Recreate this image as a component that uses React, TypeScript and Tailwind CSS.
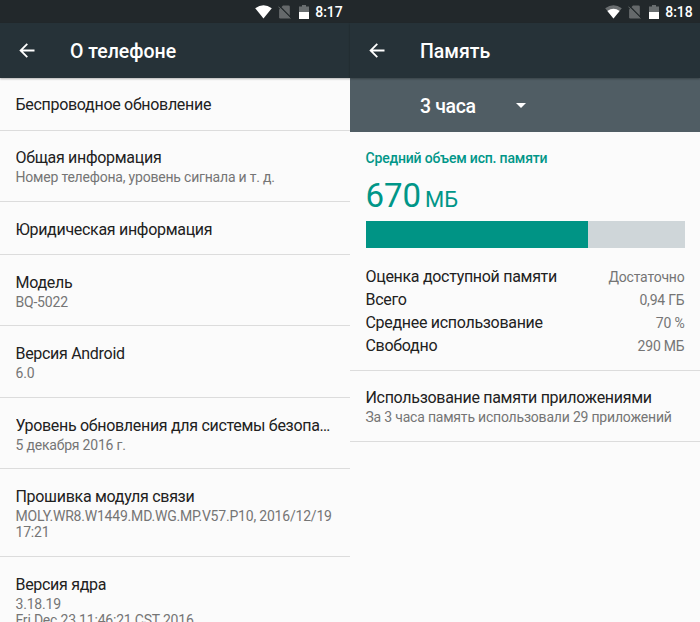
const font = "font-['Roboto','Noto_Sans',sans-serif]";
const primary = "text-[16px] leading-5 tracking-[-0.3px]";
const secondary = "text-[14px] leading-4 tracking-[-0.2px] text-[#757575]";

function StatusBar({ time, weak }: { time: string; weak?: boolean }) {
  return (
    <div className="flex h-[23px] shrink-0 items-center justify-end bg-[#22282b] pt-px pr-[7.5px] text-white">
      <svg className="mr-[6px] h-[14px] w-[17px]" viewBox="0 0 17 14">
        <path d="M0.2 3.2Q8.5 -2.6 16.8 3.2L8.5 13.6Z" fill="#fff" fillOpacity={weak ? 0.33 : 1} />
        {weak && <path d="M2.4 6Q8.5 1.6 14.6 6L8.5 13.6Z" fill="#fff" />}
      </svg>
      <svg className="mr-[8px] h-[14px] w-[13px]" viewBox="0 0 13 14">
        <path d="M5 0.5H10.5Q11.8 0.5 11.8 1.8V13.5H2.4Q1.1 13.5 1.1 12.2V4.4Z" fill="#65696b" />
        <path d="M1.2 0.8L13 12.6" stroke="#22282b" strokeWidth="1.3" />
        <path d="M0.4 1.6L12.4 13.6" stroke="#65696b" strokeWidth="1" />
      </svg>
      <svg className="mr-[6px] h-[14px] w-[10px]" viewBox="0 0 10 14">
        <path d="M0 1.5H3V0H7V1.5H10V7H0Z" fill="#696e70" />
        <path d="M0 7H10V14H0Z" fill="#fff" />
      </svg>
      <span className="text-[14px] leading-[22px] font-medium tracking-[-0.1px]">{time}</span>
    </div>
  );
}

function AppBar({ title }: { title: string }) {
  return (
    <div className="z-10 flex h-[55px] shrink-0 items-center bg-[#263238] pt-px pl-[19px] text-white shadow-[0_1px_2px_rgba(0,0,0,0.3)]">
      <svg className="h-4 w-4" viewBox="0 0 16 16" fill="none" stroke="currentColor" strokeWidth="1.8">
        <path d="M15.5 7.5H2M8.3 0.8L1.6 7.5L8.3 14.2" />
      </svg>
      <h1 className="mt-[2px] ml-[35px] text-[19.5px] leading-6 font-medium">{title}</h1>
    </div>
  );
}

const items = [
  { title: "Беспроводное обновление", box: "h-[53px] pt-[17px]" },
  { title: "Общая информация", sub: "Номер телефона, уровень сигнала и т. д.", box: "h-[71px] pt-[17px]" },
  { title: "Юридическая информация", box: "h-[53px] pt-[18px]" },
  { title: "Модель", sub: "BQ-5022", box: "h-[71px] pt-[18px]" },
  { title: "Версия Android", sub: "6.0", box: "h-[72px] pt-[18px]" },
  { title: "Уровень обновления для системы безопасности", sub: "5 декабря 2016 г.", box: "h-[71px] pt-[18px]" },
  { title: "Прошивка модуля связи", sub: "MOLY.WR8.W1449.MD.WG.MP.V57.P10, 2016/12/19 17:21", box: "h-[88px] pt-[18px]" },
  { title: "Версия ядра", sub: "3.18.19\nFri Dec 23 11:46:21 CST 2016", box: "h-[87px] pt-[18px]" },
];

const stats = [
  ["Оценка доступной памяти", "Достаточно"],
  ["Всего", "0,94 ГБ"],
  ["Среднее использование", "70 %"],
  ["Свободно", "290 МБ"],
];

export default function App() {
  return (
    <div className={`${font} flex h-[622px] w-[700px] overflow-hidden bg-[#fbfbfb] text-[#212121]`}>
      <section className="flex h-full w-[350px] flex-col overflow-hidden">
        <StatusBar time="8:17" />
        <AppBar title="О телефоне" />
        {items.map((item) => (
          <div key={item.title} className={`${item.box} shrink-0 border-b border-[#dcdcdc] pr-[15px] pl-[15.5px]`}>
            <p className={`${primary} truncate`}>{item.title}</p>
            {item.sub && <p className={`${secondary} mt-px whitespace-pre-line`}>{item.sub}</p>}
          </div>
        ))}
      </section>
      <section className="flex h-full w-[350px] flex-col">
        <StatusBar time="8:18" weak />
        <AppBar title="Память" />
        <div className="flex h-[54px] shrink-0 items-center bg-[#505d64] pt-[3px] pl-[70px] text-white">
          <span className="w-[96px] text-[19.5px] font-medium tracking-[-0.35px]">3 часа</span>
          <svg className="mb-[3px] h-[5px] w-[10px]" viewBox="0 0 10 5"><path d="M0 0H10L5 5Z" fill="currentColor" /></svg>
        </div>
        <div className="h-[239px] shrink-0 border-b border-[#dcdcdc] pr-[15.5px] pl-[15.5px] pt-4">
          <p className="text-[14px] leading-5 font-medium tracking-[-0.18px] text-[#009688]">Средний объем исп. памяти</p>
          <p className="h-[53px] pt-[8px] leading-[40px] text-[#009688]"><span className="text-[33px]">670</span> <span className="text-[22px]">МБ</span></p>
          <div className="h-[27px] bg-[#cfd6d9]"><div className="h-full w-[222px] bg-[#009485]" /></div>
          <div className="mt-[18px]">
            {stats.map(([label, value]) => (
              <div key={label} className="flex h-[22.8px] items-center justify-between">
                <span className={primary}>{label}</span><span className={secondary}>{value}</span>
              </div>
            ))}
          </div>
        </div>
        <div className="h-[71px] shrink-0 border-b border-[#dcdcdc] pr-[15px] pl-[15.5px] pt-[17px]">
          <p className={primary}>Использование памяти приложениями</p>
          <p className={`${secondary} mt-px`}>За 3 часа память использовали 29 приложений</p>
        </div>
      </section>
    </div>
  );
}
